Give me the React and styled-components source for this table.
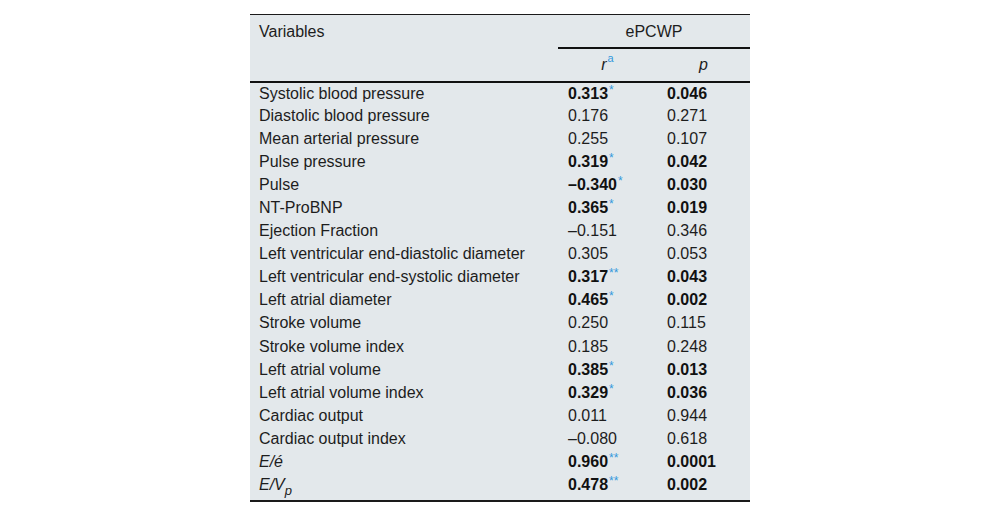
import React from "react";
import styled, { createGlobalStyle } from "styled-components";

const Global = createGlobalStyle`
  html, body { margin: 0; padding: 0; background: #ffffff; }
  body { font-family: "Liberation Sans", Arial, sans-serif; }
`;

const Page = styled.div`
  display: flex;
  justify-content: center;
  padding-top: 14px;
  width: 1000px;
`;

const Table = styled.table`
  width: 500px;
  border-collapse: collapse;
  background: #e3e8eb;
  border-top: 1px solid #1a1a1a;
  border-bottom: 2px solid #1a1a1a;
  font-size: 16px;
  color: #1d1d1d;
`;

const HeadRow = styled.tr`
  height: ${(p) => p.$h}px;
  border-bottom: ${(p) => (p.$thick ? "2px solid #111" : "none")};
`;

const Th = styled.th`
  font-weight: normal;
  text-align: ${(p) => p.$align || "center"};
  vertical-align: middle;
  padding: ${(p) => p.$pt || 0}px 0 0 ${(p) => p.$pl || 0}px;
  border-bottom: ${(p) => (p.$rule ? "2px solid #111" : "none")};
  width: ${(p) => (p.$w ? `${p.$w}px` : "auto")};
`;

const Row = styled.tr`
  height: ${(p) => (p.$last ? 28 : 23.06)}px;
`;

const Td = styled.td`
  padding: 0 0 0 ${(p) => p.$pl}px;
  font-weight: ${(p) => (p.$bold ? 700 : 400)};
  color: ${(p) => (p.$bold ? "#111" : "#1d1d1d")};
  vertical-align: ${(p) => (p.$last ? "top" : "middle")};
  padding-top: ${(p) => (p.$last ? "3px" : "0")};
  white-space: nowrap;
`;

const Sup = styled.sup`
  color: #3399dd;
  font-size: ${(p) => (p.$high ? 11 : 12)}px;
  font-weight: 400;
  vertical-align: ${(p) => (p.$high ? "8px" : "5px")};
  line-height: 0;
  margin-left: 1px;
`;

const Em = styled.i``;

const Sub = styled.sub`
  font-size: 13px;
  vertical-align: -5px;
  line-height: 0;
`;

const rows = [
  ["Systolic blood pressure", "0.313", "*", "0.046", true],
  ["Diastolic blood pressure", "0.176", "", "0.271", false],
  ["Mean arterial pressure", "0.255", "", "0.107", false],
  ["Pulse pressure", "0.319", "*", "0.042", true],
  ["Pulse", "\u20130.340", "*", "0.030", true],
  ["NT-ProBNP", "0.365", "*", "0.019", true],
  ["Ejection Fraction", "\u20130.151", "", "0.346", false],
  ["Left ventricular end-diastolic diameter", "0.305", "", "0.053", false],
  ["Left ventricular end-systolic diameter", "0.317", "**", "0.043", true],
  ["Left atrial diameter", "0.465", "*", "0.002", true],
  ["Stroke volume", "0.250", "", "0.115", false],
  ["Stroke volume index", "0.185", "", "0.248", false],
  ["Left atrial volume", "0.385", "*", "0.013", true],
  ["Left atrial volume index", "0.329", "*", "0.036", true],
  ["Cardiac output", "0.011", "", "0.944", false],
  ["Cardiac output index", "\u20130.080", "", "0.618", false],
  [<Em key="e">E/é</Em>, "0.960", "**", "0.0001", true],
  [
    <Em key="v">
      E/V<Sub>p</Sub>
    </Em>,
    "0.478",
    "**",
    "0.002",
    true,
  ],
];

export default function App() {
  return (
    <>
      <Global />
      <Page>
        <Table>
          <thead>
            <HeadRow $h={33}>
              <Th $align="left" $pl={9} $pt={2}>
                Variables
              </Th>
              <Th colSpan={2} $rule $pt={2}>
                ePCWP
              </Th>
            </HeadRow>
            <HeadRow $h={34} $thick>
              <Th />
              <Th $w={99}>
                <Em>r</Em>
                <Sup $high>a</Sup>
              </Th>
              <Th $w={93}>
                <Em>p</Em>
              </Th>
            </HeadRow>
          </thead>
          <tbody>
            {rows.map(([name, r, star, p, bold], i) => {
              const last = i === rows.length - 1;
              return (
                <Row key={i} $last={last}>
                  <Td $pl={9} $last={last}>{name}</Td>
                  <Td $pl={10} $bold={bold} $last={last}>
                    {r}
                    {star && <Sup>{star}</Sup>}
                  </Td>
                  <Td $pl={10} $bold={bold} $last={last}>{p}</Td>
                </Row>
              );
            })}
          </tbody>
        </Table>
      </Page>
    </>
  );
}
